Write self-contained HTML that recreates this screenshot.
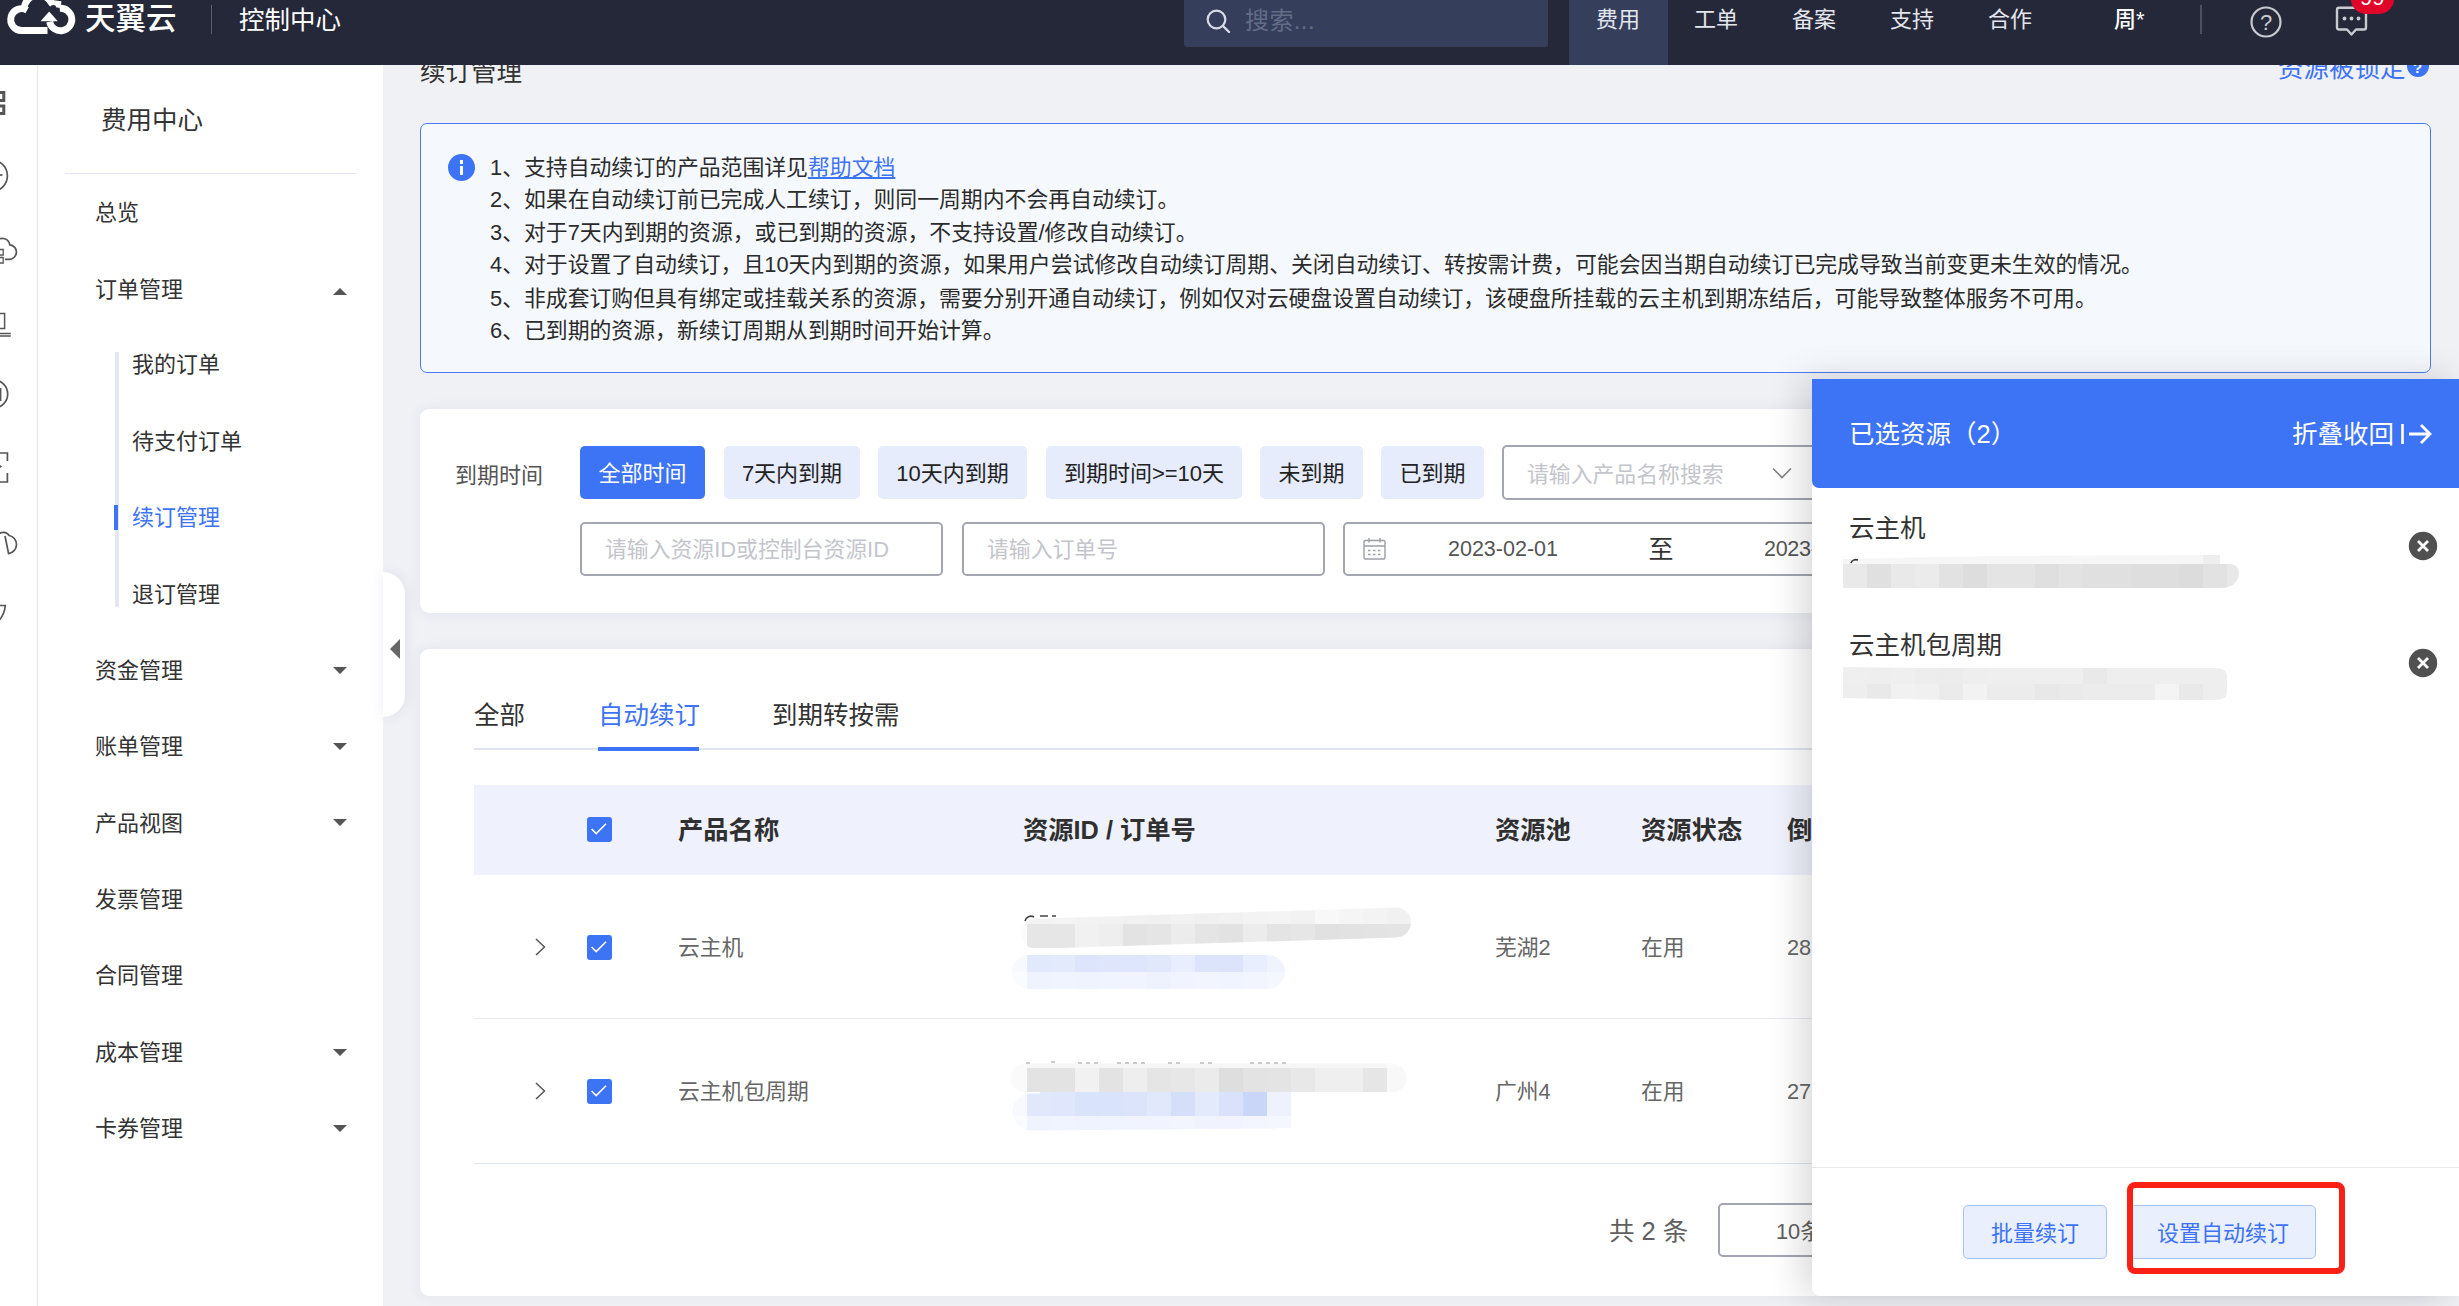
<!DOCTYPE html>
<html lang="zh-CN">
<head>
<meta charset="utf-8">
<title>续订管理</title>
<style>
*{box-sizing:border-box;margin:0;padding:0}
html,body{width:2459px;height:1306px;overflow:hidden;background:#f0f1f5}
body{font-family:"Liberation Sans","Noto Sans CJK SC",sans-serif;color:#333;position:relative}
.abs{position:absolute}
.t{position:absolute;white-space:nowrap;line-height:1}
/* top bar */
#top{left:0;top:0;width:2459px;height:65px;background:#252838}
#search{left:1184px;top:0;width:364px;height:47px;background:#353f5c;border-radius:0 0 3px 3px}
#navact{left:1569px;top:0;width:99px;height:65px;background:#353f5c}
.nav{font-size:22px;color:#e4e6ee;top:9px}
/* left */
#strip{left:0;top:65px;width:38px;height:1241px;background:#fff;border-right:1px solid #e4e6f2}
#side{left:38px;top:65px;width:345px;height:1241px;background:#fff}
.m{font-size:22px;color:#333;left:95px}
.sm{font-size:22px;color:#333;left:132px}
.arr{left:333px;width:0;height:0;border-left:7px solid transparent;border-right:7px solid transparent}
.arr.d{border-top:7px solid #555}
.arr.u{border-bottom:7px solid #555}
/* info */
#info{left:420px;top:123px;width:2011px;height:250px;background:#f5f9fe;border:1px solid #4a7cf3;border-radius:7px}
.il{font-size:21.85px;color:#2b2b2b;left:490px}
/* cards */
.card{background:#fff;border-radius:9px;box-shadow:0 0 14px rgba(60,70,110,.075)}
.fb{top:446px;height:53px;border-radius:5px;background:#e6ecfc;font-size:22px;color:#222;text-align:center;line-height:55px;white-space:nowrap}
.inp{border:2px solid #a3a6b0;border-radius:5px;background:#fff;height:54px}
.ph{font-size:21.85px;color:#c3c5cb}
.cb{width:25px;height:25px;background:#3d73f5;border-radius:3px}
.th{font-size:25.3px;font-weight:bold;color:#303030;top:818px}
.td{font-size:21.8px;color:#666}
/* drawer */
#drawer{left:1812px;top:379px;width:647px;height:917px;background:#fff;box-shadow:-9px 0 36px rgba(0,0,0,.16);border-radius:0 0 0 8px}
#dhead{left:1812px;top:379px;width:647px;height:109px;background:#3d73f5;border-radius:0 0 0 7px}
.btn2{top:1205px;height:54px;border:1px solid #a9c0f8;background:#e9effd;border-radius:5px;font-size:22px;color:#3d73f5;text-align:center;line-height:56px}
</style>
</head>
<body>
<!-- TOPBAR -->
<div id="top" class="abs"></div>
<svg class="abs" style="left:0;top:0" width="90" height="40" viewBox="0 0 90 40">
  <g fill="none" stroke="#fff" stroke-width="6.8" stroke-linejoin="round">
  <path d="M47.5 30.5 L21.7 30.5 A10.9 10.9 0 1 1 27.1 10.2"/>
  <path d="M24.2 7.5 A14.4 14.4 0 0 1 51.6 3.4 L61 4.6"/>
  <path d="M59.7 8.3 A11.25 11.25 0 1 1 49.6 21.8"/>
  </g>
  <circle cx="53.3" cy="8" r="3" fill="#252838"/>
  <polygon points="40.5,21.3 49.2,11.6 57.8,21.3" fill="#fff"/>
</svg>
<div class="t" style="left:85px;top:3px;font-size:30.5px;color:#fff;font-weight:500;letter-spacing:0px">天翼云</div>
<div class="abs" style="left:211px;top:5px;width:1px;height:29px;background:#5a5d6b"></div>
<div class="t" style="left:239px;top:8px;font-size:25.5px;color:#fff">控制中心</div>
<div id="search" class="abs"></div>
<svg class="abs" style="left:1203px;top:6px" width="30" height="30" viewBox="0 0 30 30"><circle cx="13.5" cy="13.5" r="8.8" fill="none" stroke="#d8dbe6" stroke-width="2.2"/><path d="M20 20 L26 26" stroke="#d8dbe6" stroke-width="2.4" stroke-linecap="round"/></svg>
<div class="t" style="left:1245px;top:9px;font-size:24px;color:#636c85;letter-spacing:.4px">搜索...</div>
<div id="navact" class="abs"></div>
<div class="t nav" style="left:1596px">费用</div>
<div class="t nav" style="left:1694px">工单</div>
<div class="t nav" style="left:1792px">备案</div>
<div class="t nav" style="left:1890px">支持</div>
<div class="t nav" style="left:1988px">合作</div>
<div class="t nav" style="left:2114px;color:#fff;font-weight:500">周*</div>
<div class="abs" style="left:2200px;top:5px;width:2px;height:29px;background:#4d5060"></div>
<svg class="abs" style="left:2248px;top:4px" width="36" height="36" viewBox="0 0 36 36"><circle cx="18" cy="18" r="14.5" fill="none" stroke="#c9cacf" stroke-width="2.2"/><text x="18" y="26" font-size="22" fill="#c9cacf" text-anchor="middle" font-family="Liberation Sans, sans-serif">?</text></svg>
<svg class="abs" style="left:2332px;top:4px" width="40" height="36" viewBox="0 0 40 36"><path d="M7 3.8 H32 Q34 3.8 34 5.8 V23.5 Q34 25.5 32 25.5 H24 L19.5 30.5 L15 25.5 H7 Q5 25.5 5 23.5 V5.8 Q5 3.8 7 3.8 Z" fill="none" stroke="#c9cacf" stroke-width="2.4" stroke-linejoin="round"/><circle cx="12.5" cy="14.5" r="1.9" fill="#c9cacf"/><circle cx="19.5" cy="14.5" r="1.9" fill="#c9cacf"/><circle cx="26.5" cy="14.5" r="1.9" fill="#c9cacf"/></svg>
<div class="abs" style="left:2351px;top:-16px;width:43px;height:30px;border-radius:15px;background:#e0062a;overflow:hidden"><div class="t" style="left:9px;top:3px;font-size:22px;color:#fff">99</div></div>
<!-- STRIP+SIDE -->
<div id="strip" class="abs"></div>
<div id="side" class="abs"></div>
<svg class="abs" style="left:0;top:65px" width="38" height="620" viewBox="0 0 38 620" fill="none" stroke="#555" stroke-width="1.7">
  <path d="M-4 27.5 H3.8 V35.5 H-4 M-4 41 H3.8 V48.5 H-4" stroke-width="3"/>
  <circle cx="-8.4" cy="110.8" r="15.8"/><path d="M-2 110 H2.5"/>
  <path d="M-3 175.5 A7.6 7.6 0 0 1 9.8 179.8 A6.9 6.9 0 0 1 8.5 194.3 H5"/><path d="M-3 184.5 H3.2 V190 H-3 M-3 192.5 H3.2 V198 H-3" stroke-width="1.3"/>
  <path d="M-2 248.5 H4.6 V263.5 H-2 M-2 268.5 H10.8 M-2 271 H10.8" stroke-width="1.5"/>
  <circle cx="-6.3" cy="329" r="14"/><path d="M0.3 323 V336" stroke-width="2.2"/>
  <path d="M-1 388 H7.4 V396 M7.4 408 V417 H-1"/><path d="M-1 400 l2 1.5 l-2 1.5" stroke-width="1.3"/>
  <path d="M-2 470 A7 7 0 0 1 9.2 470.5 A9.2 9.2 0 0 1 8.6 488.6 L5 471"/>
  <path d="M-3 540.5 H5.3 C4.8 546 3 551 -1 555.5"/>
</svg>
<div class="t" style="left:101px;top:108px;font-size:25.5px;color:#333">费用中心</div>
<div class="abs" style="left:65px;top:173px;width:291px;height:1px;background:#e3e4f0"></div>
<div class="t m" style="top:202px">总览</div>
<div class="t m" style="top:279px">订单管理</div><div class="abs arr u" style="top:288px"></div>
<div class="abs" style="left:115px;top:352px;width:4px;height:255px;background:#e4e6f2"></div>
<div class="t sm" style="top:354px">我的订单</div>
<div class="t sm" style="top:431px">待支付订单</div>
<div class="abs" style="left:114px;top:505px;width:4px;height:25px;background:#3d73f5"></div>
<div class="t sm" style="top:507px;color:#3d73f5">续订管理</div>
<div class="t sm" style="top:584px">退订管理</div>
<div class="t m" style="top:660px">资金管理</div><div class="abs arr d" style="top:667px"></div>
<div class="t m" style="top:736px">账单管理</div><div class="abs arr d" style="top:743px"></div>
<div class="t m" style="top:813px">产品视图</div><div class="abs arr d" style="top:819px"></div>
<div class="t m" style="top:889px">发票管理</div>
<div class="t m" style="top:965px">合同管理</div>
<div class="t m" style="top:1042px">成本管理</div><div class="abs arr d" style="top:1049px"></div>
<div class="t m" style="top:1118px">卡券管理</div><div class="abs arr d" style="top:1125px"></div>
<div class="abs" style="left:383px;top:572px;width:22px;height:145px;background:#fff;border-radius:0 22px 22px 0;box-shadow:0 0 14px rgba(60,70,110,.10)"></div>
<div class="abs" style="left:390px;top:639px;width:0;height:0;border-top:10px solid transparent;border-bottom:10px solid transparent;border-right:10px solid #666"></div>
<!-- MAIN -->
<div class="abs" style="left:400px;top:65px;width:2059px;height:30px;overflow:hidden">
  <div class="t" style="left:20px;top:-5px;font-size:25.5px;color:#333">续订管理</div>
  <div class="t" style="left:1878px;top:-9px;font-size:25.5px;color:#3d73f5">资源被锁定</div>
  <div class="abs" style="left:2007px;top:-10px;width:22px;height:22px;border-radius:11px;background:#3d73f5"></div>
  <div class="t" style="left:2013px;top:-5px;font-size:15px;color:#fff;font-weight:bold">?</div>
</div>
<div id="info" class="abs"></div>
<div class="abs" style="left:448px;top:154px;width:27px;height:27px;border-radius:14px;background:#3d73f5"></div>
<div class="abs" style="left:459.7px;top:160.4px;width:3.4px;height:3.2px;background:#fff"></div>
<div class="abs" style="left:459.7px;top:166px;width:3.4px;height:8.6px;background:#fff"></div>
<div class="t il" style="top:156.5px">1、支持自动续订的产品范围详见<span style="color:#3d73f5;text-decoration:underline;text-underline-offset:2px">帮助文档</span></div>
<div class="t il" style="top:189px">2、如果在自动续订前已完成人工续订，则同一周期内不会再自动续订。</div>
<div class="t il" style="top:221.5px">3、对于7天内到期的资源，或已到期的资源，不支持设置/修改自动续订。</div>
<div class="t il" style="top:254px">4、对于设置了自动续订，且10天内到期的资源，如果用户尝试修改自动续订周期、关闭自动续订、转按需计费，可能会因当期自动续订已完成导致当前变更未生效的情况。</div>
<div class="t il" style="top:287.5px">5、非成套订购但具有绑定或挂载关系的资源，需要分别开通自动续订，例如仅对云硬盘设置自动续订，该硬盘所挂载的云主机到期冻结后，可能导致整体服务不可用。</div>
<div class="t il" style="top:319.5px">6、已到期的资源，新续订周期从到期时间开始计算。</div>
<!-- filter card -->
<div class="abs card" style="left:420px;top:409px;width:2011px;height:204px"></div>
<div class="t" style="left:455px;top:465px;font-size:22px;color:#555">到期时间</div>
<div class="abs fb" style="left:580px;width:125px;background:#3d73f5;color:#fff">全部时间</div>
<div class="abs fb" style="left:724px;width:136px">7天内到期</div>
<div class="abs fb" style="left:878px;width:149px">10天内到期</div>
<div class="abs fb" style="left:1046px;width:196px">到期时间&gt;=10天</div>
<div class="abs fb" style="left:1260px;width:103px">未到期</div>
<div class="abs fb" style="left:1381px;width:103px">已到期</div>
<div class="abs inp" style="left:1502px;top:445px;width:364px;height:55px"></div>
<div class="t ph" style="left:1527px;top:463.5px">请输入产品名称搜索</div>
<svg class="abs" style="left:1770px;top:462.5px" width="24" height="20" viewBox="0 0 24 20"><path d="M3 5.5 L12 14.5 L21 5.5" fill="none" stroke="#858585" stroke-width="1.6"/></svg>
<div class="abs inp" style="left:580px;top:522px;width:363px"></div>
<div class="t ph" style="left:605px;top:539px">请输入资源ID或控制台资源ID</div>
<div class="abs inp" style="left:962px;top:522px;width:363px"></div>
<div class="t ph" style="left:987px;top:539px">请输入订单号</div>
<div class="abs inp" style="left:1343px;top:522px;width:640px"></div>
<svg class="abs" style="left:1362px;top:536px" width="26" height="26" viewBox="0 0 26 26" fill="none" stroke="#9b9ea6" stroke-width="1.4"><rect x="2" y="4.5" width="21" height="18.5" rx="1.5"/><path d="M2 10 H23 M7 2 V6.5 M18 2 V6.5"/><path d="M6 14.5 H8.5 M11 14.5 H13.5 M16 14.5 H18.5 M6 18.5 H8.5 M11 18.5 H13.5 M16 18.5 H18.5" stroke-width="1.3"/></svg>
<div class="t" style="left:1448px;top:539px;font-size:21.5px;color:#555">2023-02-01</div>
<div class="t" style="left:1648.5px;top:537px;font-size:25px;color:#333">至</div>
<div class="t" style="left:1764px;top:539px;font-size:21.5px;color:#555;letter-spacing:-0.3px">2023-03-03</div>
<!-- table card -->
<div class="abs card" style="left:420px;top:649px;width:2011px;height:647px"></div>
<div class="t" style="left:474px;top:703px;font-size:25.5px;color:#333">全部</div>
<div class="t" style="left:598px;top:703px;font-size:25.5px;color:#3d73f5">自动续订</div>
<div class="t" style="left:772px;top:703px;font-size:25.5px;color:#333">到期转按需</div>
<div class="abs" style="left:474px;top:748px;width:1920px;height:2px;background:#dfe4f0"></div>
<div class="abs" style="left:598px;top:747px;width:101px;height:4px;background:#3d73f5"></div>
<div class="abs" style="left:474px;top:785px;width:1920px;height:90px;background:#eff2fc"></div>
<div class="abs cb" style="left:587px;top:817px"><svg viewBox="0 0 25 25" width="25" height="25" style="display:block"><path d="M4.6 12 L9.2 16.6 L19 6.8" fill="none" stroke="#fff" stroke-width="1.6"/></svg></div>
<div class="t th" style="left:678px">产品名称</div>
<div class="t th" style="left:1023px">资源ID / 订单号</div>
<div class="t th" style="left:1495px">资源池</div>
<div class="t th" style="left:1641px">资源状态</div>
<div class="t th" style="left:1787px">倒计时</div>
<div class="abs" style="left:474px;top:1018px;width:1920px;height:1px;background:#e8ebf3"></div>
<div class="abs" style="left:474px;top:1163px;width:1920px;height:1px;background:#dfe4f0"></div>
<!-- row1 -->
<svg class="abs" style="left:530px;top:935px" width="20" height="24" viewBox="0 0 20 24"><path d="M6 4 L14.5 12 L6 20" fill="none" stroke="#555" stroke-width="1.5"/></svg>
<div class="abs cb" style="left:587px;top:935px"><svg viewBox="0 0 25 25" width="25" height="25" style="display:block"><path d="M4.6 12 L9.2 16.6 L19 6.8" fill="none" stroke="#fff" stroke-width="1.6"/></svg></div>
<div class="t td" style="left:678px;top:937px">云主机</div>
<div class="t td" style="left:1495px;top:937px">芜湖2</div>
<div class="t td" style="left:1641px;top:937px">在用</div>
<div class="t td" style="left:1787px;top:937px">28</div>
<!-- row2 -->
<svg class="abs" style="left:530px;top:1079px" width="20" height="24" viewBox="0 0 20 24"><path d="M6 4 L14.5 12 L6 20" fill="none" stroke="#555" stroke-width="1.5"/></svg>
<div class="abs cb" style="left:587px;top:1079px"><svg viewBox="0 0 25 25" width="25" height="25" style="display:block"><path d="M4.6 12 L9.2 16.6 L19 6.8" fill="none" stroke="#fff" stroke-width="1.6"/></svg></div>
<div class="t td" style="left:678px;top:1081px">云主机包周期</div>
<div class="t td" style="left:1495px;top:1081px">广州4</div>
<div class="t td" style="left:1641px;top:1081px">在用</div>
<div class="t td" style="left:1787px;top:1081px">27</div>
<!-- TBLOBS --><svg class="abs" style="left:1000px;top:890px" width="440" height="260" viewBox="1000 890 440 260"><defs><mask id="m1" maskUnits="userSpaceOnUse" x="1000" y="890" width="440" height="260"><path d="M1036 933.7 L1396 922.5" stroke="#fff" stroke-width="30" stroke-linecap="round"/></mask><mask id="m2" maskUnits="userSpaceOnUse" x="1000" y="890" width="440" height="260"><path d="M1029 972 L1268 972" stroke="#fff" stroke-width="34" stroke-linecap="round"/></mask><mask id="m3" maskUnits="userSpaceOnUse" x="1000" y="890" width="440" height="260"><path d="M1025 1078 L1392 1078" stroke="#fff" stroke-width="29" stroke-linecap="round"/></mask><mask id="m4" maskUnits="userSpaceOnUse" x="1000" y="890" width="440" height="260"><path d="M1031 1112 L1275 1110" stroke="#fff" stroke-width="37" stroke-linecap="round"/><rect x="1040" y="1092" width="251" height="36" fill="#fff"/></mask></defs><g mask="url(#m2)"><rect x="1003" y="948" width="25" height="24" fill="#f7f9fe"/><rect x="1027" y="948" width="25" height="24" fill="#e1e9fc"/><rect x="1051" y="948" width="25" height="24" fill="#e3eafc"/><rect x="1075" y="948" width="25" height="24" fill="#dde5fc"/><rect x="1099" y="948" width="25" height="24" fill="#dfe6fc"/><rect x="1123" y="948" width="25" height="24" fill="#dde6fc"/><rect x="1147" y="948" width="25" height="24" fill="#e1e8fc"/><rect x="1171" y="948" width="25" height="24" fill="#e8eefd"/><rect x="1195" y="948" width="25" height="24" fill="#dbe4fb"/><rect x="1219" y="948" width="25" height="24" fill="#dbe4fb"/><rect x="1243" y="948" width="25" height="24" fill="#e8eefd"/><rect x="1267" y="948" width="24" height="24" fill="#f0f3fe"/><rect x="1003" y="972" width="25" height="24" fill="#fafbfe"/><rect x="1027" y="972" width="25" height="24" fill="#eff3fe"/><rect x="1051" y="972" width="25" height="24" fill="#f0f4fe"/><rect x="1075" y="972" width="25" height="24" fill="#eff3fe"/><rect x="1099" y="972" width="25" height="24" fill="#f0f4fe"/><rect x="1123" y="972" width="25" height="24" fill="#f1f4fe"/><rect x="1147" y="972" width="25" height="24" fill="#eef2fd"/><rect x="1171" y="972" width="25" height="24" fill="#f1f4fe"/><rect x="1195" y="972" width="25" height="24" fill="#f2f5fe"/><rect x="1219" y="972" width="25" height="24" fill="#f0f4fe"/><rect x="1243" y="972" width="25" height="24" fill="#f2f5fe"/><rect x="1267" y="972" width="24" height="24" fill="#f5f7fe"/></g><g mask="url(#m1)"><rect x="1003" y="900" width="25" height="24" fill="#fbfbfb"/><rect x="1027" y="900" width="25" height="24" fill="#f3f3f3"/><rect x="1051" y="900" width="25" height="24" fill="#f4f4f4"/><rect x="1075" y="900" width="25" height="24" fill="#f2f2f2"/><rect x="1099" y="900" width="25" height="24" fill="#f2f2f2"/><rect x="1123" y="900" width="25" height="24" fill="#f1f1f1"/><rect x="1147" y="900" width="25" height="24" fill="#f0f0f0"/><rect x="1171" y="900" width="25" height="24" fill="#f2f2f2"/><rect x="1195" y="900" width="25" height="24" fill="#f0f0f0"/><rect x="1219" y="900" width="25" height="24" fill="#f1f1f1"/><rect x="1243" y="900" width="25" height="24" fill="#f3f3f3"/><rect x="1267" y="900" width="25" height="24" fill="#f4f4f4"/><rect x="1291" y="900" width="25" height="24" fill="#f2f2f2"/><rect x="1315" y="900" width="25" height="24" fill="#f8f8f8"/><rect x="1339" y="900" width="25" height="24" fill="#f5f5f5"/><rect x="1363" y="900" width="25" height="24" fill="#f3f3f3"/><rect x="1387" y="900" width="24" height="24" fill="#f1f1f1"/><rect x="1003" y="924" width="25" height="24" fill="#fbfbfb"/><rect x="1027" y="924" width="25" height="24" fill="#e6e6e6"/><rect x="1051" y="924" width="25" height="24" fill="#e6e6e6"/><rect x="1075" y="924" width="25" height="24" fill="#f1f1f1"/><rect x="1099" y="924" width="25" height="24" fill="#eeeeee"/><rect x="1123" y="924" width="25" height="24" fill="#e3e3e3"/><rect x="1147" y="924" width="25" height="24" fill="#e5e5e5"/><rect x="1171" y="924" width="25" height="24" fill="#ececec"/><rect x="1195" y="924" width="25" height="24" fill="#e5e5e5"/><rect x="1219" y="924" width="25" height="24" fill="#e2e2e2"/><rect x="1243" y="924" width="25" height="24" fill="#ececec"/><rect x="1267" y="924" width="25" height="24" fill="#e4e4e4"/><rect x="1291" y="924" width="25" height="24" fill="#e6e6e6"/><rect x="1315" y="924" width="25" height="24" fill="#e1e1e1"/><rect x="1339" y="924" width="25" height="24" fill="#e2e2e2"/><rect x="1363" y="924" width="25" height="24" fill="#e3e3e3"/><rect x="1387" y="924" width="24" height="24" fill="#e4e4e4"/></g><g mask="url(#m4)"><rect x="1003" y="1092" width="25" height="24" fill="#f7f9fe"/><rect x="1027" y="1092" width="25" height="24" fill="#e1e8fc"/><rect x="1051" y="1092" width="25" height="24" fill="#e0e7fc"/><rect x="1075" y="1092" width="25" height="24" fill="#d9e3fb"/><rect x="1099" y="1092" width="25" height="24" fill="#d9e3fb"/><rect x="1123" y="1092" width="25" height="24" fill="#dbe4fb"/><rect x="1147" y="1092" width="25" height="24" fill="#e1e8fc"/><rect x="1171" y="1092" width="25" height="24" fill="#d5dff9"/><rect x="1195" y="1092" width="25" height="24" fill="#e3eafc"/><rect x="1219" y="1092" width="25" height="24" fill="#d9e2fa"/><rect x="1243" y="1092" width="25" height="24" fill="#cad6f8"/><rect x="1267" y="1092" width="24" height="24" fill="#eef2fd"/><rect x="1003" y="1116" width="25" height="24" fill="#fafbfe"/><rect x="1027" y="1116" width="25" height="24" fill="#eff3fe"/><rect x="1051" y="1116" width="25" height="24" fill="#f0f4fe"/><rect x="1075" y="1116" width="25" height="24" fill="#eff3fe"/><rect x="1099" y="1116" width="25" height="24" fill="#f0f4fe"/><rect x="1123" y="1116" width="25" height="24" fill="#f1f4fe"/><rect x="1147" y="1116" width="25" height="24" fill="#f1f4fe"/><rect x="1171" y="1116" width="25" height="24" fill="#f2f5fe"/><rect x="1195" y="1116" width="25" height="24" fill="#f0f3fe"/><rect x="1219" y="1116" width="25" height="24" fill="#f1f4fe"/><rect x="1243" y="1116" width="25" height="24" fill="#f3f6fe"/><rect x="1267" y="1116" width="24" height="24" fill="#f5f7fe"/></g><g mask="url(#m3)"><rect x="1003" y="1044" width="25" height="24" fill="#fafafa"/><rect x="1027" y="1044" width="25" height="24" fill="#f6f6f6"/><rect x="1051" y="1044" width="25" height="24" fill="#f6f6f6"/><rect x="1075" y="1044" width="25" height="24" fill="#f6f6f6"/><rect x="1099" y="1044" width="25" height="24" fill="#f6f6f6"/><rect x="1123" y="1044" width="25" height="24" fill="#f6f6f6"/><rect x="1147" y="1044" width="25" height="24" fill="#f6f6f6"/><rect x="1171" y="1044" width="25" height="24" fill="#f6f6f6"/><rect x="1195" y="1044" width="25" height="24" fill="#f6f6f6"/><rect x="1219" y="1044" width="25" height="24" fill="#f6f6f6"/><rect x="1243" y="1044" width="25" height="24" fill="#f6f6f6"/><rect x="1267" y="1044" width="25" height="24" fill="#f6f6f6"/><rect x="1291" y="1044" width="25" height="24" fill="#f6f6f6"/><rect x="1315" y="1044" width="25" height="24" fill="#f6f6f6"/><rect x="1339" y="1044" width="25" height="24" fill="#f6f6f6"/><rect x="1363" y="1044" width="25" height="24" fill="#f6f6f6"/><rect x="1387" y="1044" width="24" height="24" fill="#fafafa"/><rect x="1003" y="1068" width="25" height="24" fill="#fafafa"/><rect x="1027" y="1068" width="25" height="24" fill="#e3e3e3"/><rect x="1051" y="1068" width="25" height="24" fill="#e3e3e3"/><rect x="1075" y="1068" width="25" height="24" fill="#f1f1f1"/><rect x="1099" y="1068" width="25" height="24" fill="#e3e3e3"/><rect x="1123" y="1068" width="25" height="24" fill="#eeeeee"/><rect x="1147" y="1068" width="25" height="24" fill="#e5e5e5"/><rect x="1171" y="1068" width="25" height="24" fill="#e7e7e7"/><rect x="1195" y="1068" width="25" height="24" fill="#ebebeb"/><rect x="1219" y="1068" width="25" height="24" fill="#dedede"/><rect x="1243" y="1068" width="25" height="24" fill="#e3e3e3"/><rect x="1267" y="1068" width="25" height="24" fill="#e4e4e4"/><rect x="1291" y="1068" width="25" height="24" fill="#e8e8e8"/><rect x="1315" y="1068" width="25" height="24" fill="#efefef"/><rect x="1339" y="1068" width="25" height="24" fill="#efefef"/><rect x="1363" y="1068" width="25" height="24" fill="#e6e6e6"/><rect x="1387" y="1068" width="24" height="24" fill="#f8f8f8"/></g><path d="M1025 921 a6 6 0 0 1 9 -4 M1040 916 h8 M1052 916 h4" stroke="#444" stroke-width="1.6" fill="none"/><path d="M1026 1063 h7 M1051 1062 h4 M1078 1063 h22 M1117 1063 h30 M1168 1063 h12 M1200 1063 h14 M1250 1063 h40" stroke="#999" stroke-width="1" fill="none" stroke-dasharray="4 4"/></svg><!-- /TBLOBS -->
<!-- pagination -->
<div class="t" style="left:1609px;top:1219px;font-size:25.5px;color:#606060">共 2 条</div>
<div class="abs inp" style="left:1718px;top:1203px;width:160px"></div>
<div class="t" style="left:1776px;top:1221px;font-size:21.8px;color:#606060">10条/页</div>
<!-- DRAWER -->
<div id="drawer" class="abs"></div>
<div id="dhead" class="abs"></div>
<div class="t" style="left:1849px;top:422px;font-size:25.5px;color:#fff">已选资源（2）</div>
<div class="t" style="left:2292px;top:422px;font-size:25.5px;color:#fff">折叠收回</div>
<svg class="abs" style="left:2398px;top:419px" width="38" height="30" viewBox="0 0 38 30" fill="none" stroke="#fff" stroke-width="2.4"><path d="M4.5 5 V25" stroke-width="2.6"/><path d="M11 15 H32 M23 6 L32 15 L23 24" stroke-width="2.8" stroke-linejoin="miter"/></svg>
<div class="t" style="left:1849px;top:516px;font-size:25.5px;color:#333">云主机</div>
<div class="t" style="left:1849px;top:633px;font-size:25.5px;color:#333">云主机包周期</div>
<svg class="abs" style="left:2408px;top:531px" width="30" height="30" viewBox="0 0 30 30"><circle cx="15" cy="15" r="14.2" fill="#505050"/><path d="M10 10 L20 20 M20 10 L10 20" stroke="#fff" stroke-width="2.8"/></svg>
<svg class="abs" style="left:2408px;top:648px" width="30" height="30" viewBox="0 0 30 30"><circle cx="15" cy="15" r="14.2" fill="#505050"/><path d="M10 10 L20 20 M20 10 L10 20" stroke="#fff" stroke-width="2.8"/></svg>
<div class="abs" style="left:1812px;top:1167px;width:647px;height:1px;background:#e9e9ec"></div>
<div class="abs btn2" style="left:1963px;width:144px">批量续订</div>
<div class="abs btn2" style="left:2130px;width:186px">设置自动续订</div>
<div class="abs" style="left:2127px;top:1182px;width:218px;height:92px;border:6.5px solid #fb2016;border-radius:8px"></div>
<!-- DBLOBS --><svg class="abs" style="left:1830px;top:540px" width="440" height="180" viewBox="1830 540 440 180"><defs><clipPath id="c1"><path d="M1843 559 L1990 556 L2220 555 L2220 564 L2228 564 Q2239 564 2239 573 Q2238 588 2220 588 L1843 588 Z"/></clipPath><clipPath id="c2"><path d="M1843 667 L1920 668 L2215 668 Q2227 668 2227 676 L2227 693 Q2227 700 2215 700 L1950 700 L1843 698 Z"/></clipPath></defs><g clip-path="url(#c1)"><rect x="1843" y="540" width="25" height="24" fill="#f6f6f6"/><rect x="1867" y="540" width="25" height="24" fill="#f6f6f6"/><rect x="1891" y="540" width="25" height="24" fill="#f6f6f6"/><rect x="1915" y="540" width="25" height="24" fill="#f6f6f6"/><rect x="1939" y="540" width="25" height="24" fill="#f6f6f6"/><rect x="1963" y="540" width="25" height="24" fill="#f6f6f6"/><rect x="1987" y="540" width="25" height="24" fill="#f6f6f6"/><rect x="2011" y="540" width="25" height="24" fill="#f6f6f6"/><rect x="2035" y="540" width="25" height="24" fill="#f6f6f6"/><rect x="2059" y="540" width="25" height="24" fill="#f6f6f6"/><rect x="2083" y="540" width="25" height="24" fill="#f6f6f6"/><rect x="2107" y="540" width="25" height="24" fill="#f6f6f6"/><rect x="2131" y="540" width="25" height="24" fill="#f6f6f6"/><rect x="2155" y="540" width="25" height="24" fill="#f6f6f6"/><rect x="2179" y="540" width="25" height="24" fill="#f6f6f6"/><rect x="2203" y="540" width="25" height="24" fill="#eeeeee"/><rect x="2227" y="540" width="24" height="24" fill="#f6f6f6"/><rect x="1843" y="564" width="25" height="24" fill="#e9e9e9"/><rect x="1867" y="564" width="25" height="24" fill="#e0e0e0"/><rect x="1891" y="564" width="25" height="24" fill="#e9e9e9"/><rect x="1915" y="564" width="25" height="24" fill="#ebebeb"/><rect x="1939" y="564" width="25" height="24" fill="#e2e2e2"/><rect x="1963" y="564" width="25" height="24" fill="#dddddd"/><rect x="1987" y="564" width="25" height="24" fill="#e4e4e4"/><rect x="2011" y="564" width="25" height="24" fill="#e4e4e4"/><rect x="2035" y="564" width="25" height="24" fill="#dfdfdf"/><rect x="2059" y="564" width="25" height="24" fill="#e3e3e3"/><rect x="2083" y="564" width="25" height="24" fill="#e0e0e0"/><rect x="2107" y="564" width="25" height="24" fill="#e0e0e0"/><rect x="2131" y="564" width="25" height="24" fill="#dedede"/><rect x="2155" y="564" width="25" height="24" fill="#dedede"/><rect x="2179" y="564" width="25" height="24" fill="#dcdcdc"/><rect x="2203" y="564" width="25" height="24" fill="#e2e2e2"/><rect x="2227" y="564" width="24" height="24" fill="#e8e8e8"/></g><g clip-path="url(#c2)"><rect x="1843" y="660" width="25" height="24" fill="#efefef"/><rect x="1867" y="660" width="25" height="24" fill="#eeeeee"/><rect x="1891" y="660" width="25" height="24" fill="#efefef"/><rect x="1915" y="660" width="25" height="24" fill="#ededed"/><rect x="1939" y="660" width="25" height="24" fill="#ececec"/><rect x="1963" y="660" width="25" height="24" fill="#eeeeee"/><rect x="1987" y="660" width="25" height="24" fill="#efefef"/><rect x="2011" y="660" width="25" height="24" fill="#efefef"/><rect x="2035" y="660" width="25" height="24" fill="#efefef"/><rect x="2059" y="660" width="25" height="24" fill="#efefef"/><rect x="2083" y="660" width="25" height="24" fill="#e9e9e9"/><rect x="2107" y="660" width="25" height="24" fill="#eeeeee"/><rect x="2131" y="660" width="25" height="24" fill="#eeeeee"/><rect x="2155" y="660" width="25" height="24" fill="#eeeeee"/><rect x="2179" y="660" width="25" height="24" fill="#eeeeee"/><rect x="2203" y="660" width="24" height="24" fill="#eeeeee"/><rect x="1843" y="684" width="25" height="24" fill="#eeeeee"/><rect x="1867" y="684" width="25" height="24" fill="#e9e9e9"/><rect x="1891" y="684" width="25" height="24" fill="#f1f1f1"/><rect x="1915" y="684" width="25" height="24" fill="#f0f0f0"/><rect x="1939" y="684" width="25" height="24" fill="#ebebeb"/><rect x="1963" y="684" width="25" height="24" fill="#f2f2f2"/><rect x="1987" y="684" width="25" height="24" fill="#ececec"/><rect x="2011" y="684" width="25" height="24" fill="#ececec"/><rect x="2035" y="684" width="25" height="24" fill="#e8e8e8"/><rect x="2059" y="684" width="25" height="24" fill="#eaeaea"/><rect x="2083" y="684" width="25" height="24" fill="#ececec"/><rect x="2107" y="684" width="25" height="24" fill="#ececec"/><rect x="2131" y="684" width="25" height="24" fill="#ececec"/><rect x="2155" y="684" width="25" height="24" fill="#f4f4f4"/><rect x="2179" y="684" width="25" height="24" fill="#e9e9e9"/><rect x="2203" y="684" width="24" height="24" fill="#eeeeee"/></g><path d="M1851 563 a5 4 0 0 1 7 -3" stroke="#333" stroke-width="1.6" fill="none"/></svg><!-- /DBLOBS -->
</body>
</html>
